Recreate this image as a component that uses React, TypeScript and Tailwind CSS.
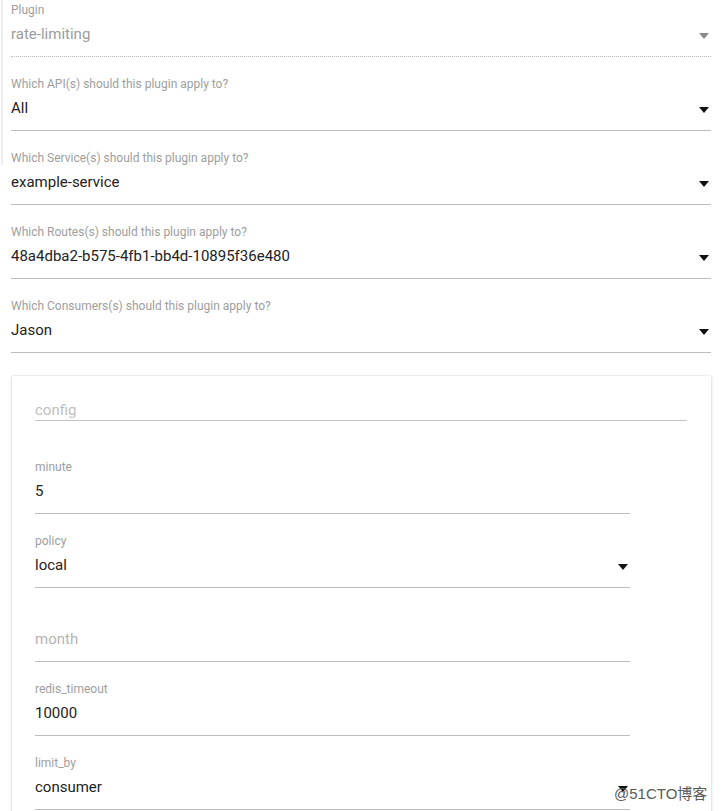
import React from 'react';

type FieldProps = {
    label?: string;
    value: string;
    placeholder?: boolean;
    disabled?: boolean;
    select?: boolean;
    className?: string;
};

// small filled triangle used by the select inputs
const Arrow = ({ color }: { color: string }) => (
    <svg width="10" height="6" viewBox="0 0 10 6" className="shrink-0">
        <polygon points="0,0 10,0 5,6" fill={color} />
    </svg>
);

const Field = ({ label, value, placeholder, disabled, select, className }: FieldProps) => {
    const valueColor = placeholder ? 'text-[#b4b4b4]' : disabled ? 'text-[#9c9c9c]' : 'text-[#222222]';
    return (
        <div className={`flex flex-col pt-[3px] ${className ?? ''}`}>
            <div className="h-[14px] text-[12px] leading-[14px] text-[#9e9e9e]">{label ?? ''}</div>
            <div
                className={`mt-[7px] flex h-[33px] items-start pb-[12px] ${
                    disabled ? 'border-b border-dotted border-[#b8b8b8]' : 'border-b border-[#bdbdbd]'
                }`}
            >
                <span className={`flex-1 text-[15px] leading-[20px] ${valueColor}`}>{value}</span>
                {select && (
                    <span className="mr-[2px] mt-[9px]">
                        <Arrow color={disabled ? '#8a8a8a' : '#111111'} />
                    </span>
                )}
            </div>
        </div>
    );
};

const App = () => {
    return (
        <div
            className="relative h-[811px] w-[722px] overflow-hidden bg-white px-[11px]"
            style={{ fontFamily: 'Roboto, "Liberation Sans", sans-serif' }}
        >
            <div className="absolute left-[1px] top-0 h-[165px] w-[2px] bg-[#ededed]" />

            <div className="flex flex-col gap-[17px]">
                <Field label="Plugin" value="rate-limiting" disabled select />
                <Field label="Which API(s) should this plugin apply to?" value="All" select />
                <Field label="Which Service(s) should this plugin apply to?" value="example-service" select />
                <Field label="Which Routes(s) should this plugin apply to?" value="48a4dba2-b575-4fb1-bb4d-10895f36e480" select />
                <Field label="Which Consumers(s) should this plugin apply to?" value="Jason" select />
            </div>

            <div className="mt-[23px] ml-[1px] h-[500px] bg-white px-[23px] pt-[24px] shadow-[0_1px_4px_rgba(0,0,0,0.16),0_0_1px_rgba(0,0,0,0.2)]">
                <div className="w-[652px] border-b border-[#c4c4c4] text-[15px] leading-[20px] text-[#c0c0c0]">
                    config
                </div>

                <div className="mt-[36px] flex w-[595px] flex-col gap-[17px]">
                    <Field label="minute" value="5" />
                    <Field label="policy" value="local" select />
                    <Field value="month" placeholder />
                    <Field label="redis_timeout" value="10000" />
                    <Field label="limit_by" value="consumer" select />
                </div>
            </div>

            <div
                className="absolute left-[614px] top-[785px] text-[15px] leading-[18px] text-[#5a5a5a]"
                style={{ fontFamily: '"Liberation Sans", "Noto Sans CJK SC", sans-serif' }}
            >
                @51CTO博客
            </div>
        </div>
    );
};

export default App;
